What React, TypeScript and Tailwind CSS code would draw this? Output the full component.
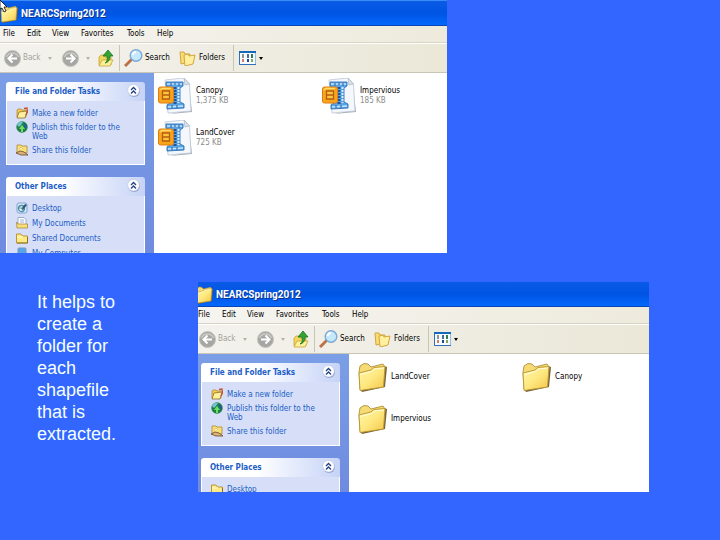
import type { ReactNode } from "react";

type Place = { label: string; icon: ReactNode };
type FileItem = { name: string; size?: string };

const uiFont = "font-['DejaVu_Sans_Condensed','DejaVu_Sans',sans-serif]";

function Folder({ className }: { className: string }) {
  return (
    <svg viewBox="0 0 30 30" className={className} aria-hidden="true">
      <defs>
        <linearGradient id="folderFront" x1="0" y1="0" x2="1" y2="1">
          <stop offset="0" stopColor="#fff8ac" />
          <stop offset="0.5" stopColor="#fee880" />
          <stop offset="1" stopColor="#f3c548" />
        </linearGradient>
      </defs>
      <path d="M27 4 L30 5 L28 25 L5 30 L3 27 Z" fill="#75643a" />
      <path d="M2 10 L3 4 L7 1.500 L11 2 L14 5 L26 2 L28 5 L26 24 L3 27 Z" fill="#f6da73" stroke="#b0913c" strokeWidth="0.9" />
      <path d="M2 11 L14 8 L17 5.500 L28 4.500 L26.500 25 L3 28.500 Z" fill="url(#folderFront)" stroke="#b8932f" strokeWidth="0.9" />
      <path d="M3 12.500 L14.500 9.500 L17.500 7 L27 6" fill="none" stroke="#fffde0" strokeWidth="1" />
    </svg>
  );
}

function ZipFile({ className }: { className: string }) {
  return (
    <svg viewBox="0 0 34 36" className={className} aria-hidden="true">
      <path d="M31 8 L34 34 L12 36 L30 32 Z" fill="#a9adb5" />
      <path d="M7 2 L26 0 L31.500 6 L33 33 L10 35 Z" fill="#f4f8fd" stroke="#bcc7d5" strokeWidth="0.8" />
      <path d="M26 0 L27 7 L31.500 6 Z" fill="#d8e0ea" stroke="#aab6c6" strokeWidth="0.7" />
      <path d="M8 4 L25 4 L25 8 L22 10 L22 24 L26 26 L26 30 L9 31 L9 27 L12 25 L12 10 L8 8 Z" fill="#5aa3e2" stroke="#2f6fb8" strokeWidth="0.9" />
      <path d="M9 6 H24 M10 29 L25 28" stroke="#c2e6fb" strokeWidth="1.5" />
      <path d="M17 9 V26" stroke="#24559b" strokeWidth="3" strokeDasharray="2 1" />
      <path d="M20.500 9 V25" stroke="#d3ecfd" strokeWidth="2" strokeDasharray="2 1" />
      <path d="M13 5 V8 M17 4.500 V7 M21 5 V8 M14 27 V30 M19 27 V30" stroke="#2f6fb8" strokeWidth="1.2" />
      <rect x="0.5" y="9" width="15" height="16" rx="2" fill="#f8a51b" stroke="#dd7d13" />
      <path d="M2 12 L4 10.500 H13" stroke="#ffdc6b" strokeWidth="1.500" fill="none" />
      <path d="M4.500 13 H11.500 V21 H4.500 Z M4.500 17 H11.500" fill="#fbc63b" stroke="#b65c10" strokeWidth="1.3" />
    </svg>
  );
}

function SmallFolder() {
  return <svg viewBox="0 0 12 12" className="size-full" aria-hidden="true">
    <path d="M1 3 L2 2 H5 L6 3 H10 V10 H1 Z" fill="#f3cd55" stroke="#a9822c" strokeWidth="0.7" />
    <path d="M1 11 L3 5 L11 4 L9 11 Z" fill="#fff0a0" stroke="#8f6f22" strokeWidth="0.8" />
    <path d="M8 1.500 L11 1 L11.500 5 L10 8" fill="none" stroke="#c8502f" strokeWidth="1.3" />
  </svg>;
}

function PlainFolder() {
  return <svg viewBox="0 0 12 12" className="size-full" aria-hidden="true">
    <path d="M0.500 2 H5 L6.500 4 H11.500 V11 H0.500 Z" fill="#fdea84" stroke="#b58d28" strokeWidth="0.9" />
    <path d="M1 5 H6 L7 4.500" stroke="#fffbd0" fill="none" />
    <path d="M11.500 5 V11 H1" stroke="#80671f" fill="none" strokeWidth="0.8" />
  </svg>;
}

function Globe() {
  return <svg viewBox="0 0 12 12" className="size-full" aria-hidden="true">
    <circle cx="6" cy="6" r="5.7" fill="#1f7f48" />
    <path d="M1 4 Q3 0 7 1 L5 4 L3 6 Z" fill="#6fc5cf" />
    <path d="M8 2 L11 5 L10 8 L8 6 Z" fill="#1f5f95" />
    <path d="M6 4 L9 8 H7 V11 H5 V8 H3 Z" fill="#6fdc62" />
  </svg>;
}

function ShareFolder() {
  return <svg viewBox="0 0 12 12" className="size-full" aria-hidden="true">
    <path d="M1 1 H5 L6 2 H11 V9 H1 Z" fill="#f9df78" stroke="#a98530" strokeWidth="0.8" />
    <path d="M3 5 L5 3 L7 5" fill="#fffbe0" stroke="#c3a14a" strokeWidth="0.6" />
    <path d="M0 9 L4 7 L8 8 L12 11 H5 Z" fill="#e2b27a" stroke="#5f4a27" strokeWidth="0.8" />
  </svg>;
}

function DesktopIcon() {
  return <svg viewBox="0 0 12 12" className="size-full" aria-hidden="true">
    <rect x="1" y="1" width="10" height="10" rx="2" fill="#dceaf8" stroke="#6a93c2" strokeWidth="0.8" />
    <circle cx="5.5" cy="6.5" r="3" fill="#fff" stroke="#3f8fb5" strokeWidth="1.3" />
    <path d="M5 7 L9 2 L11 3 L7 8 Z" fill="#31547b" />
    <path d="M3 6 H7" stroke="#54a061" />
  </svg>;
}

function DocumentsIcon() {
  return <svg viewBox="0 0 12 12" className="size-full" aria-hidden="true">
    <path d="M2 0.500 H8 L10 2.500 V9 H2 Z" fill="#fff" stroke="#809bc2" strokeWidth="0.8" />
    <path d="M4 3 H8 M4 5 H8" stroke="#7b9dd0" strokeWidth="0.8" />
    <path d="M0.500 5 L2 7 H11.500 V11 H1 Z" fill="#f7df80" stroke="#ad8a36" strokeWidth="0.8" />
  </svg>;
}

function ComputerIcon() {
  return <svg viewBox="0 0 12 12" className="size-full" aria-hidden="true">
    <rect x="2" y="1" width="8" height="7" rx="1" fill="#58a6e5" stroke="#7896bd" />
    <path d="M1 10 H11" stroke="#bcc5d0" strokeWidth="2" />
  </svg>;
}

function RoundArrow({ forward = false }: { forward?: boolean }) {
  return (
    <svg viewBox="0 0 17 17" className="size-[17px] shrink-0" aria-hidden="true">
      <circle cx="8.5" cy="8.5" r="8" fill="#a6a6a3" stroke="#c4c4bf" />
      <path d="M2.500 7 A6.500 6.500 0 0 1 14.500 7" fill="none" stroke="#c9c9c6" strokeWidth="1.500" />
      <path
        d={forward ? "M4 8.500 H12 M8.500 4.500 L12.500 8.500 L8.500 12.500" : "M13 8.500 H5 M8.500 4.500 L4.500 8.500 L8.500 12.500"}
        fill="none" stroke="#fff" strokeWidth="2"
      />
    </svg>
  );
}

function Caret({ className }: { className: string }) {
  return <svg viewBox="0 0 4 3" className={`h-[3px] w-1 shrink-0 ${className}`} aria-hidden="true"><path d="M0 0 H4 L2 3 Z" fill="currentColor" /></svg>;
}

function Toolbar() {
  return (
    <div className="flex h-[30px] shrink-0 items-center border-t border-b border-t-white border-b-[#c9c6b6] bg-linear-to-r from-[#f3f2ed] to-[#ebe8d8] pl-1 text-black">
      <button className="flex w-11 items-center gap-[2px] text-[#a5a398]"><RoundArrow />Back</button>
      <Caret className="mr-[10px] text-[#b5b3a8]" />
      <button aria-label="Forward" className="w-6"><RoundArrow forward /></button>
      <Caret className="mr-2 text-[#b5b3a8]" />
      <button aria-label="Up" className="mr-[5px]">
        <svg viewBox="0 0 16 18" className="h-[18px] w-4" aria-hidden="true">
          <path d="M1 8 L3 6 H6 L7 8 H13 V16 H1 Z" fill="#f2d65c" stroke="#c6a43a" strokeWidth="0.8" />
          <path d="M1 17 L4 11 H15 L12 17 Z" fill="#fff09a" stroke="#c9a53b" strokeWidth="0.8" />
          <path d="M7 14 Q10 13 9 7 H5 L10 1 L15 7 H12 Q12 13 7 14 Z" fill="#35a332" stroke="#167521" strokeWidth="0.8" />
        </svg>
      </button>
      <span className="h-[26px] w-px bg-[#c9c6b6]" />
      <button className="ml-1 flex w-[55px] items-center gap-[2px]">
        <svg viewBox="0 0 19 18" className="h-[18px] w-[19px] shrink-0" aria-hidden="true">
          <path d="M1 17 L8 10" stroke="#b9714a" strokeWidth="3" />
          <path d="M1 15 L7 9" stroke="#edb58d" strokeWidth="1" />
          <circle cx="12" cy="6.5" r="5.8" fill="#c5e9fc" stroke="#7ba9d6" strokeWidth="1.4" />
          <path d="M8.500 6 Q9 3 12 3" stroke="#fff" strokeWidth="2" fill="none" />
        </svg>
        Search
      </button>
      <button className="flex w-[54px] items-center gap-[3px]">
        <svg viewBox="0 0 17 16" className="h-4 w-[17px] shrink-0" aria-hidden="true">
          <path d="M1 2 H5 L6 4 H11 V12 L2 14 Z" fill="#f8dc72" stroke="#d3a640" />
          <path d="M5 5 L9 4 L10 6 L16 5 L14 14 L6 16 Z" fill="#fff0a0" stroke="#d3a640" />
        </svg>
        Folders
      </button>
      <span className="h-[26px] w-px bg-[#c9c6b6]" />
      <button aria-label="Views" className="ml-[5px] flex items-center gap-[3px]">
        <svg viewBox="0 0 17 14" className="h-[14px] w-[17px]" aria-hidden="true">
          <rect x="0.5" y="0.5" width="16" height="13" fill="#f5fbff" stroke="#8dbce4" />
          <path d="M0.500 0 V13.500 H17" fill="none" stroke="#2f70b8" />
          <path d="M0 1 H17" stroke="#1768b8" strokeWidth="2" />
          <path d="M3 3 H5 V7 H3Z" fill="#929292" /><path d="M8 3 H10 V7 H8Z" fill="#466f91" /><path d="M12 3 H14 V7 H12Z" fill="#377a4d" />
          <path d="M3 8 H5 V11 H3Z" fill="#d27b62" /><path d="M8 8 H10 V11 H8Z" fill="#22479a" /><path d="M12 8 H14 V11 H12Z" fill="#89a34e" />
        </svg>
        <Caret className="text-black" />
      </button>
    </div>
  );
}

function Panel({ title, items, rowGap }: { title: string; items: Place[]; rowGap: string }) {
  return (
    <section className="shrink-0">
      <h2 className="flex h-[19px] items-center justify-between rounded-t-[3px] bg-linear-to-r from-white from-40% to-[#c6d3f7] pr-[5px] pl-[9px] text-[8px] font-bold whitespace-nowrap text-[#215dc6]">
        {title}
        <button aria-label={`Collapse ${title}`} className="mb-[2px]">
          <svg viewBox="0 0 13 13" className="size-[13px]" aria-hidden="true">
            <circle cx="7" cy="7" r="6" fill="#8e9dc9" />
            <circle cx="6.5" cy="6.2" r="5.8" fill="#fff" stroke="#c4cde5" strokeWidth="0.7" />
            <path d="M4 6 L6.500 3.500 L9 6 M4 9.500 L6.500 7 L9 9.500" fill="none" stroke="#1f3f87" strokeWidth="1.3" />
          </svg>
        </button>
      </h2>
      <ul className={`flex flex-col border border-t-0 border-white bg-[#d6dff7] pt-2 pr-2 pb-[9px] pl-[9px] leading-[9px] text-[#215dc6] ${rowGap}`}>
        {items.map((item) => (
          <li key={item.label}>
            <a href="#" className="flex items-start gap-1">
              <span className="-my-[2px] size-3 shrink-0">{item.icon}</span>
              <span>{item.label}</span>
            </a>
          </li>
        ))}
      </ul>
    </section>
  );
}

const tasks: Place[] = [
  { label: "Make a new folder", icon: <SmallFolder /> },
  { label: "Publish this folder to the Web", icon: <Globe /> },
  { label: "Share this folder", icon: <ShareFolder /> },
];

function Explorer({ files, places }: { files: FileItem[]; places: Place[] }) {
  return (
    <div className={`flex h-full flex-col text-[8px] leading-[10px] ${uiFont}`}>
      <header className="flex h-[26px] shrink-0 items-center gap-[3px] border-t border-b border-t-[#3d8cf5] border-b-[#0a45b5] bg-linear-to-b from-[#0a5be6] via-[#0054e3] to-[#0468fc] pt-[2px]">
        <Folder className="h-[18px] w-[18px]" />
        <h1 className="font-[Roboto,sans-serif] text-[10px] font-bold text-white [text-shadow:1px_1px_0_#0a2f8a]">NEARCSpring2012</h1>
      </header>
      <nav className="flex h-[17px] shrink-0 items-center border-b border-[#d8d4c4] bg-linear-to-r from-[#f5f4f0] to-[#eeebdd] pl-[3px] text-black">
        <button className="w-6 text-left">File</button>
        <button className="w-[25px] text-left">Edit</button>
        <button className="w-[29px] text-left">View</button>
        <button className="w-[46px] text-left">Favorites</button>
        <button className="w-[30px] text-left">Tools</button>
        <button className="text-left">Help</button>
      </nav>
      <Toolbar />
      <div className="flex min-h-0 flex-1">
        <aside className="flex w-[154px] shrink-0 flex-col gap-3 overflow-hidden bg-linear-to-b from-[#7b9fe6] to-[#6f8be0] pt-[9px] pr-[9px] pl-[6px]">
          <Panel title="File and Folder Tasks" items={tasks} rowGap="gap-[5px]" />
          <Panel title="Other Places" items={places} rowGap="gap-[6px]" />
        </aside>
        <ul className="grid flex-1 auto-rows-[42px] grid-cols-[164px_1fr] bg-white pt-[2px] pl-[2px] text-black">
          {files.map((file) => (
            <li key={file.name} className="flex items-center gap-1">
              <span className="flex w-9 shrink-0 justify-end">
                {file.size ? <ZipFile className="h-9 w-[34px]" /> : <Folder className="size-[30px]" />}
              </span>
              <span>
                {file.name}
                {file.size && <span className="block text-[#8c8c8c]">{file.size}</span>}
              </span>
            </li>
          ))}
        </ul>
      </div>
    </div>
  );
}

export default function App() {
  return (
    <main className="min-h-screen bg-[#3366ff]">
      <div className="relative h-[253px] max-w-[447px] overflow-hidden">
        <Explorer
          files={[
            { name: "Canopy", size: "1,375 KB" },
            { name: "Impervious", size: "185 KB" },
            { name: "LandCover", size: "725 KB" },
          ]}
          places={[
            { label: "Desktop", icon: <DesktopIcon /> },
            { label: "My Documents", icon: <DocumentsIcon /> },
            { label: "Shared Documents", icon: <PlainFolder /> },
            { label: "My Computer", icon: <ComputerIcon /> },
          ]}
        />
        <svg viewBox="0 0 8 13" className="absolute top-0 left-0 h-[13px] w-2" aria-hidden="true">
          <path d="M0 0 L7 7 H4 L6 11 L4 12 L2 8 L0 9 Z" fill="#fff" stroke="#000" strokeWidth="0.8" />
        </svg>
      </div>
      <div className="flex pt-[29px] pr-[71px]">
        <p className="w-[198px] shrink-0 pt-[9px] pr-[76px] pl-[37px] font-['Liberation_Sans',Arial,sans-serif] text-[18px] leading-[22px] text-[#f4ffff]">
          It helps to create a folder for each shapefile that is extracted.
        </p>
        <div className="h-[210px] min-w-0 flex-1 overflow-hidden">
          <div className="-mt-px -ml-[3px] h-[211px]">
            <Explorer
              files={[{ name: "LandCover" }, { name: "Canopy" }, { name: "Impervious" }]}
              places={[
                { label: "Desktop", icon: <PlainFolder /> },
              ]}
            />
          </div>
        </div>
      </div>
    </main>
  );
}
